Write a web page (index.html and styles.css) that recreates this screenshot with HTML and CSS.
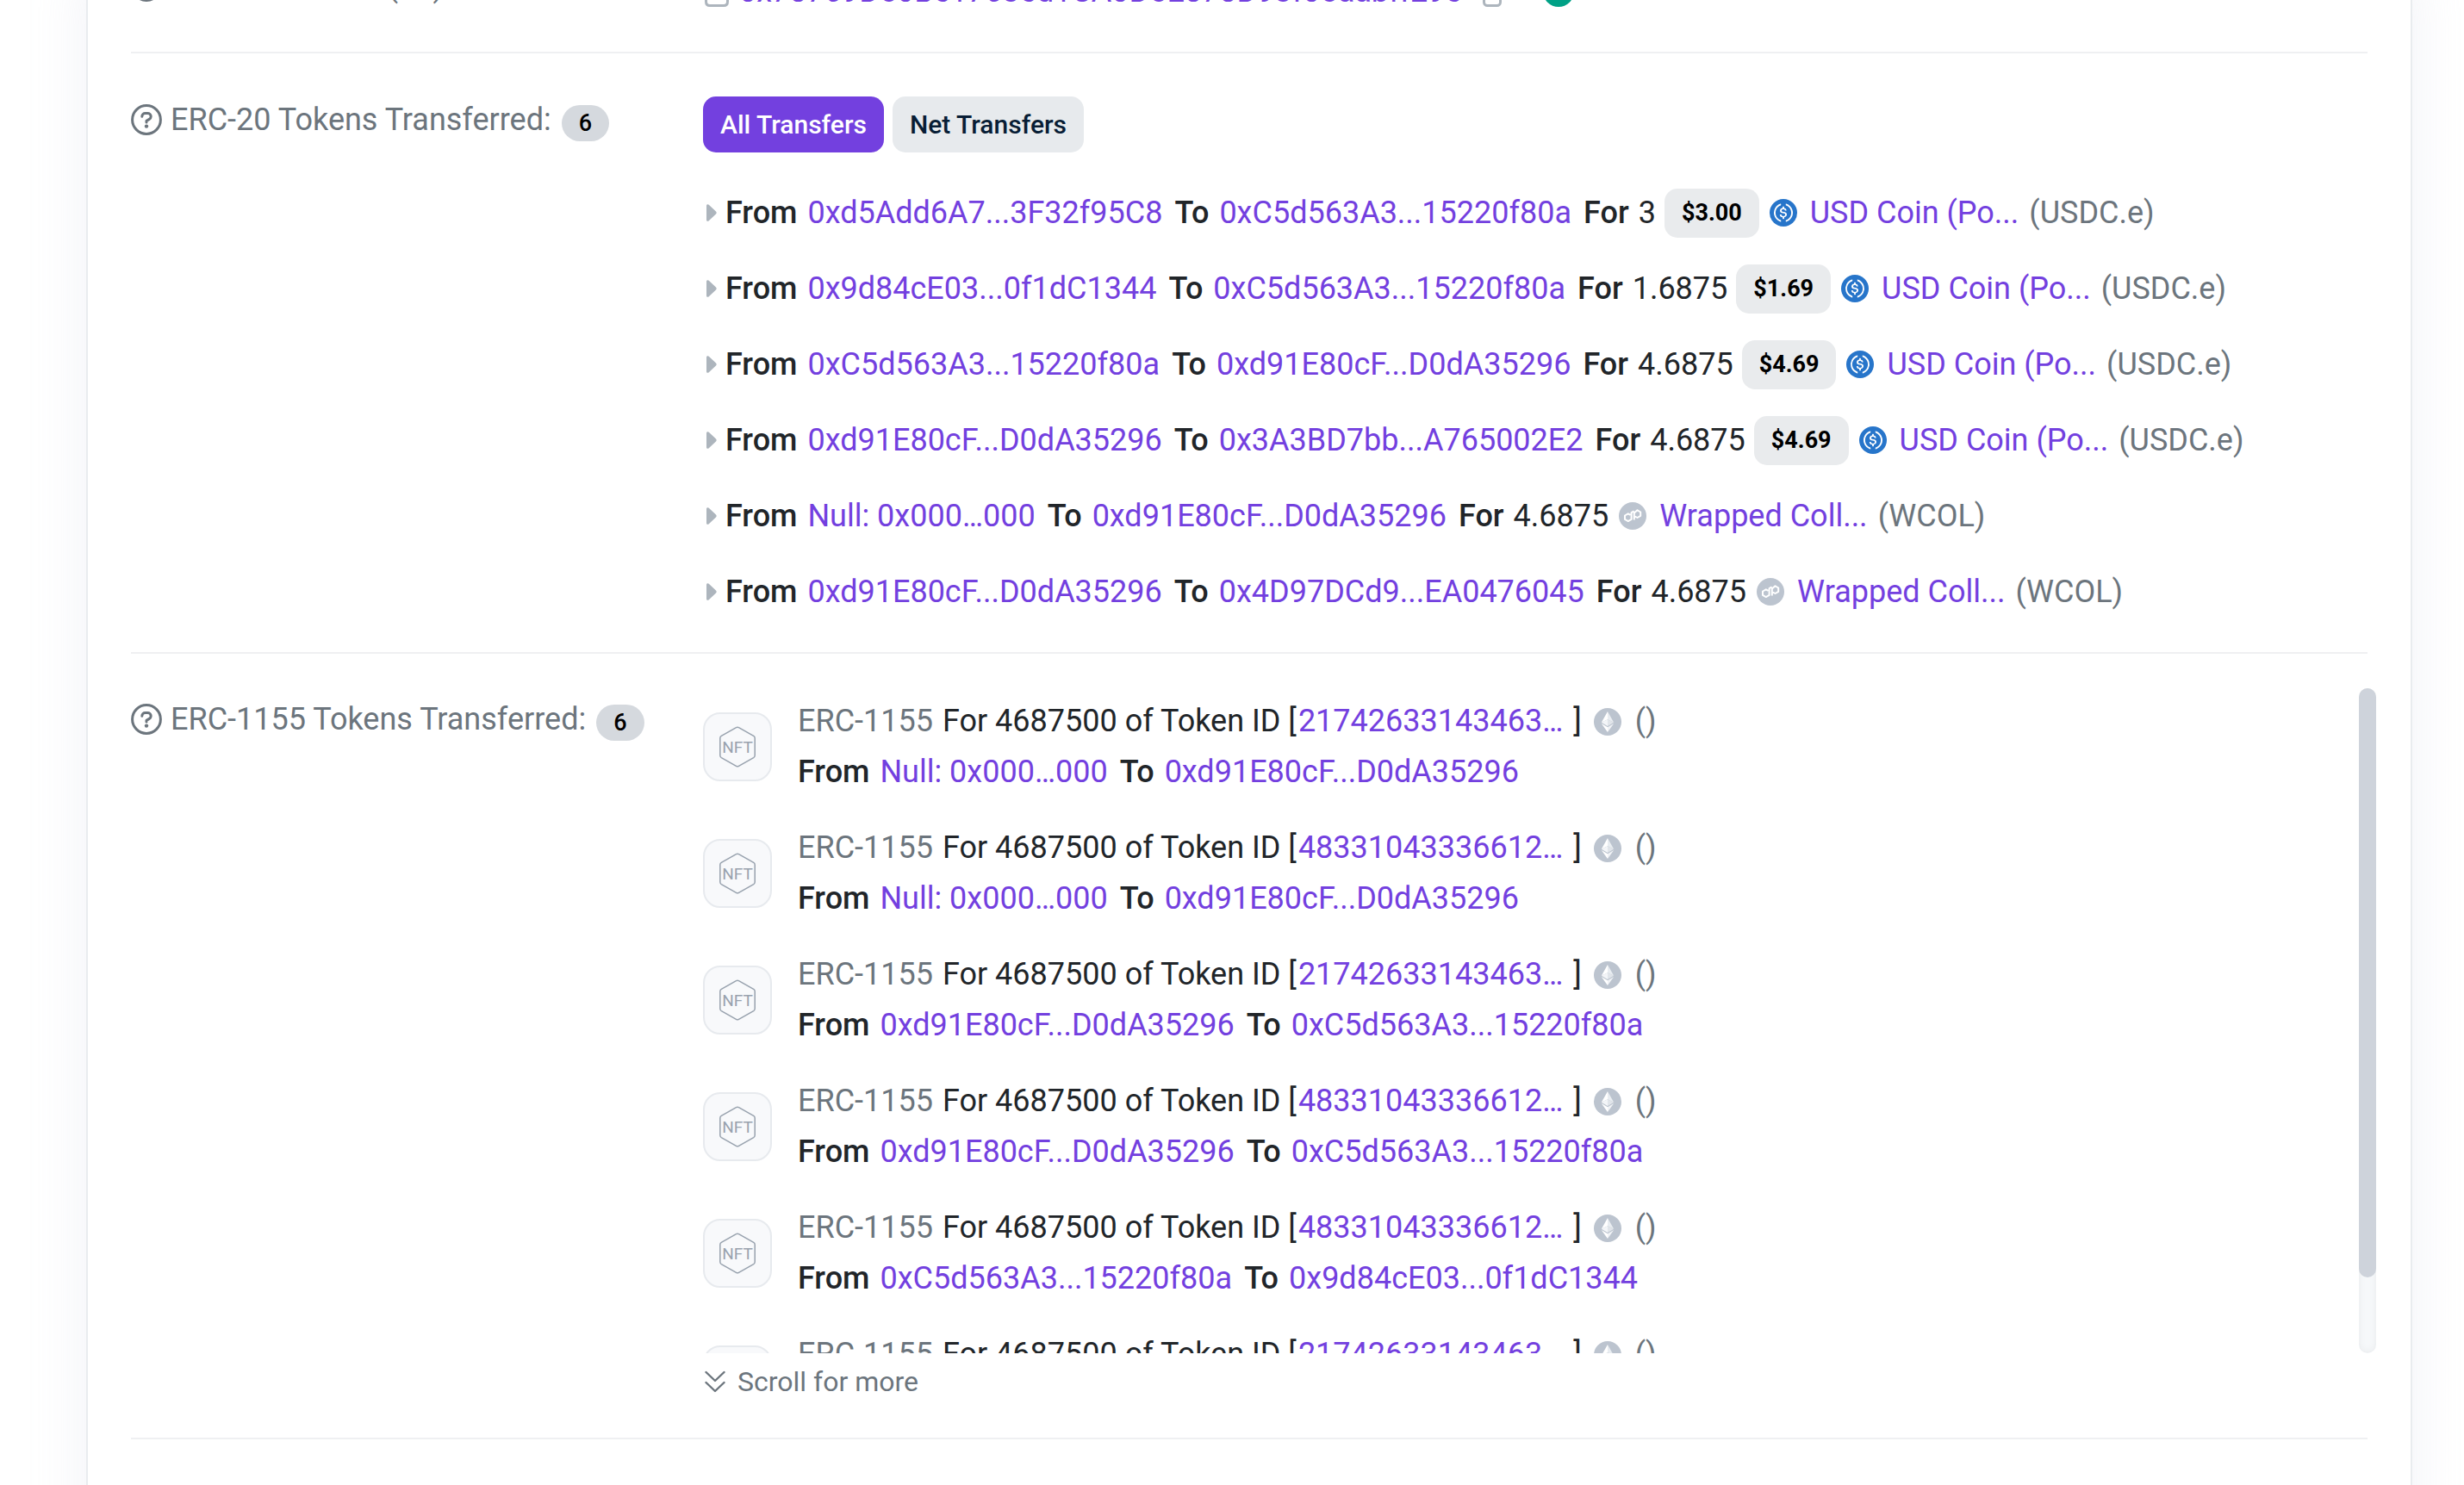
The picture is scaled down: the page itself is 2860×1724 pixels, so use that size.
FILE: index.html
```html
<!DOCTYPE html>
<html lang="en">
<head>
<meta charset="utf-8">
<title>Transaction Details</title>
<link rel="stylesheet" href="styles.css">
</head>
<body>
<svg class="sprite" aria-hidden="true">
  <symbol id="help" viewBox="0 0 36 36"><circle cx="18" cy="18" r="16.4" fill="none" stroke="currentColor" stroke-width="3"/><path d="M12.8 14.2c0-2.300 1.700-3.700 3.800-3.700h2.700c2.200 0 3.900 1.600 3.900 3.700 0 1.400-.7 2.500-1.900 3.200L18 19.400v1.500" fill="none" stroke="currentColor" stroke-width="3" stroke-linecap="round" stroke-linejoin="round"/><circle cx="18" cy="25.600" r="2.200" fill="currentColor"/></symbol>
  <symbol id="caret" viewBox="0 0 12 20"><path d="M0 1.800C0 0 1.800-.2 2.800.8L11 8.600c.9.9.9 1.900 0 2.800L2.800 19.200C1.800 20.200 0 20 0 18.200z" fill="currentColor"/></symbol>
  <symbol id="usdc" viewBox="0 0 32 32"><circle cx="16" cy="16" r="16" fill="#2775ca"/><path fill="#fff" d="M20.022 18.124c0-2.124-1.280-2.852-3.840-3.156-1.828-.243-2.193-.728-2.193-1.578 0-.85.61-1.396 1.828-1.396 1.097 0 1.707.364 2.011 1.275a.458.458 0 00.427.303h.975a.416.416 0 00.427-.425v-.06a3.040 3.040 0 00-2.743-2.489V9.142c0-.243-.183-.425-.487-.486h-.915c-.243 0-.426.182-.487.486v1.396c-1.829.242-2.986 1.456-2.986 2.974 0 2.002 1.218 2.791 3.778 3.095 1.707.303 2.255.668 2.255 1.639 0 .97-.853 1.638-2.011 1.638-1.585 0-2.133-.667-2.316-1.578-.06-.242-.244-.364-.427-.364h-1.036a.416.416 0 00-.426.425v.06c.243 1.518 1.219 2.610 3.230 2.914v1.457c0 .242.183.425.487.485h.915c.243 0 .426-.182.487-.485V21.340c1.829-.303 3.047-1.578 3.047-3.217z"/><path fill="#fff" d="M12.892 24.497c-4.754-1.700-7.192-6.980-5.424-11.653.914-2.550 2.925-4.491 5.424-5.402.244-.121.365-.303.365-.607v-.85c0-.242-.121-.424-.365-.485-.061 0-.183 0-.244.06a10.895 10.895 0 00-7.130 13.717c1.096 3.400 3.717 6.010 7.130 7.102.244.121.488 0 .548-.243.061-.06.061-.122.061-.243v-.85c0-.182-.182-.424-.365-.546zm6.460-18.936c-.244-.122-.488 0-.548.242-.061.061-.061.122-.061.243v.85c0 .243.182.485.365.607 4.754 1.700 7.192 6.980 5.424 11.653-.914 2.550-2.925 4.491-5.424 5.402-.244.121-.365.303-.365.607v.85c0 .242.121.424.365.485.061 0 .183 0 .244-.06a10.895 10.895 0 007.130-13.717c-1.096-3.460-3.778-6.070-7.130-7.162z"/></symbol>
  <symbol id="polygon" viewBox="0 0 32 32"><circle cx="16" cy="16" r="16" fill="#bcc4cf"/><path d="M13.500 14.800l-2.700-1.500-3.800 2.200v4.400l3.800 2.200 3.800-2.200v-7.800l3-1.800M17.800 20.500v-7.900l3.700-3.300 3.700 2.200v4.300l-3.700 2.200-2.700-1.500" fill="none" stroke="#fff" stroke-width="2" stroke-linejoin="round"/></symbol>
  <symbol id="eth" viewBox="0 0 32 32"><circle cx="16" cy="16" r="16" fill="#bcc4cf"/><path d="M16 4v9.200l7.200 3.500z" fill="#e9edf1"/><path d="M16 4 8.800 16.700l7.200-3.500z" fill="#fff"/><path d="M16 13.200v7.700l7.200-4.200z" fill="#e1e5ea"/><path d="M16 13.200l-7.200 3.500 7.200 4.200z" fill="#f3f5f8"/><path d="M16 22.200v5.800l7.200-10z" fill="#f1f3f6"/><path d="M16 28v-5.800L8.800 18z" fill="#fff"/></symbol>
  <symbol id="nft" viewBox="0 0 44 48"><path d="M20.500 1.700q1.500-.9 3 0l17.200 9.700q1.500.9 1.500 2.600v20q0 1.700-1.500 2.600L23.500 46.300q-1.500.9-3 0L3.300 36.600q-1.500-.9-1.500-2.600V14q0-1.700 1.500-2.600z" fill="none" stroke="#98a2ae" stroke-width="1.500"/><text class="nft-text" x="22" y="31" text-anchor="middle">NFT</text></symbol>
  <symbol id="file" viewBox="0 0 28 36"><path d="M6 1.500h11l9.500 9V30q0 4.500-4.500 4.500H6Q1.500 34.500 1.500 30V6Q1.500 1.500 6 1.500z" fill="none" stroke="currentColor" stroke-width="3"/></symbol>
  <symbol id="copy" viewBox="0 0 22 36"><rect x="1.500" y="8" width="19" height="26.500" rx="4" fill="none" stroke="currentColor" stroke-width="3"/></symbol>
  <symbol id="check" viewBox="0 0 36 36"><circle cx="18" cy="18" r="18" fill="#00a186"/><path d="M10 18l6 6 10-11" fill="none" stroke="#fff" stroke-width="3"/></symbol>
  <symbol id="chevrons" viewBox="0 0 24 26"><path d="M1.500 2l10.500 10L22.500 2M1.500 14l10.500 10 10.500-10" fill="none" stroke="currentColor" stroke-width="2.400" stroke-linecap="round" stroke-linejoin="round"/></symbol>
</svg>

<main class="card">
  <section class="row row-to">
    <h2 class="label"><svg class="i-help"><use href="#help"/></svg>Interacted With (To):</h2>
    <div class="to-line"><svg class="i-file"><use href="#file"/></svg><a href="#">0x78769D50Be1763ed1CA0D5E878D93f05aabff29e</a><svg class="i-copy"><use href="#copy"/></svg><svg class="i-check"><use href="#check"/></svg></div>
  </section>

  <section class="row row-erc20">
    <h2 class="label"><svg class="i-help"><use href="#help"/></svg>ERC-20 Tokens Transferred: <span class="count">6</span></h2>
    <div class="content">
      <div class="tabs"><button class="tab active" type="button">All Transfers</button><button class="tab" type="button">Net Transfers</button></div>
      <ul class="transfers">
        <li class="transfer"><svg class="i-caret"><use href="#caret"/></svg><b>From</b><a class="address" href="#">0xd5Add6A7...3F32f95C8</a><b>To</b><a class="address" href="#">0xC5d563A3...15220f80a</a><b>For</b><span class="amount">3</span><span class="price">$3.00</span><svg class="i-token"><use href="#usdc"/></svg><a class="token" href="#">USD Coin (Po...</a><span class="muted">(USDC.e)</span></li>
        <li class="transfer"><svg class="i-caret"><use href="#caret"/></svg><b>From</b><a class="address" href="#">0x9d84cE03...0f1dC1344</a><b>To</b><a class="address" href="#">0xC5d563A3...15220f80a</a><b>For</b><span class="amount">1.6875</span><span class="price">$1.69</span><svg class="i-token"><use href="#usdc"/></svg><a class="token" href="#">USD Coin (Po...</a><span class="muted">(USDC.e)</span></li>
        <li class="transfer"><svg class="i-caret"><use href="#caret"/></svg><b>From</b><a class="address" href="#">0xC5d563A3...15220f80a</a><b>To</b><a class="address" href="#">0xd91E80cF...D0dA35296</a><b>For</b><span class="amount">4.6875</span><span class="price">$4.69</span><svg class="i-token"><use href="#usdc"/></svg><a class="token" href="#">USD Coin (Po...</a><span class="muted">(USDC.e)</span></li>
        <li class="transfer"><svg class="i-caret"><use href="#caret"/></svg><b>From</b><a class="address" href="#">0xd91E80cF...D0dA35296</a><b>To</b><a class="address" href="#">0x3A3BD7bb...A765002E2</a><b>For</b><span class="amount">4.6875</span><span class="price">$4.69</span><svg class="i-token"><use href="#usdc"/></svg><a class="token" href="#">USD Coin (Po...</a><span class="muted">(USDC.e)</span></li>
        <li class="transfer"><svg class="i-caret"><use href="#caret"/></svg><b>From</b><a class="address" href="#">Null: 0x000…000</a><b>To</b><a class="address" href="#">0xd91E80cF...D0dA35296</a><b>For</b><span class="amount">4.6875</span><svg class="i-token"><use href="#polygon"/></svg><a class="token" href="#">Wrapped Coll...</a><span class="muted">(WCOL)</span></li>
        <li class="transfer"><svg class="i-caret"><use href="#caret"/></svg><b>From</b><a class="address" href="#">0xd91E80cF...D0dA35296</a><b>To</b><a class="address" href="#">0x4D97DCd9...EA0476045</a><b>For</b><span class="amount">4.6875</span><svg class="i-token"><use href="#polygon"/></svg><a class="token" href="#">Wrapped Coll...</a><span class="muted">(WCOL)</span></li>
      </ul>
    </div>
  </section>

  <section class="row row-erc1155">
    <h2 class="label"><svg class="i-help"><use href="#help"/></svg>ERC-1155 Tokens Transferred: <span class="count">6</span></h2>
    <div class="content">
      <div class="scroller">
        <ul class="nfts" tabindex="0">
          <li class="nft"><span class="thumb"><svg class="i-nft"><use href="#nft"/></svg></span><div><p class="line"><span class="muted kind">ERC-1155</span> For 4687500 of Token ID [<a href="#">21742633143463…</a> ]<svg class="i-eth"><use href="#eth"/></svg><span class="muted">()</span></p><p class="route"><b>From</b><a class="address" href="#">Null: 0x000…000</a><b>To</b><a class="address" href="#">0xd91E80cF...D0dA35296</a></p></div></li>
          <li class="nft"><span class="thumb"><svg class="i-nft"><use href="#nft"/></svg></span><div><p class="line"><span class="muted kind">ERC-1155</span> For 4687500 of Token ID [<a href="#">48331043336612…</a> ]<svg class="i-eth"><use href="#eth"/></svg><span class="muted">()</span></p><p class="route"><b>From</b><a class="address" href="#">Null: 0x000…000</a><b>To</b><a class="address" href="#">0xd91E80cF...D0dA35296</a></p></div></li>
          <li class="nft"><span class="thumb"><svg class="i-nft"><use href="#nft"/></svg></span><div><p class="line"><span class="muted kind">ERC-1155</span> For 4687500 of Token ID [<a href="#">21742633143463…</a> ]<svg class="i-eth"><use href="#eth"/></svg><span class="muted">()</span></p><p class="route"><b>From</b><a class="address" href="#">0xd91E80cF...D0dA35296</a><b>To</b><a class="address" href="#">0xC5d563A3...15220f80a</a></p></div></li>
          <li class="nft"><span class="thumb"><svg class="i-nft"><use href="#nft"/></svg></span><div><p class="line"><span class="muted kind">ERC-1155</span> For 4687500 of Token ID [<a href="#">48331043336612…</a> ]<svg class="i-eth"><use href="#eth"/></svg><span class="muted">()</span></p><p class="route"><b>From</b><a class="address" href="#">0xd91E80cF...D0dA35296</a><b>To</b><a class="address" href="#">0xC5d563A3...15220f80a</a></p></div></li>
          <li class="nft"><span class="thumb"><svg class="i-nft"><use href="#nft"/></svg></span><div><p class="line"><span class="muted kind">ERC-1155</span> For 4687500 of Token ID [<a href="#">48331043336612…</a> ]<svg class="i-eth"><use href="#eth"/></svg><span class="muted">()</span></p><p class="route"><b>From</b><a class="address" href="#">0xC5d563A3...15220f80a</a><b>To</b><a class="address" href="#">0x9d84cE03...0f1dC1344</a></p></div></li>
          <li class="nft"><span class="thumb"><svg class="i-nft"><use href="#nft"/></svg></span><div><p class="line"><span class="muted kind">ERC-1155</span> For 4687500 of Token ID [<a href="#">21742633143463…</a> ]<svg class="i-eth"><use href="#eth"/></svg><span class="muted">()</span></p></div></li>
        </ul>
        <div class="track"><div class="handle"></div></div>
      </div>
      <p class="more"><svg class="i-more"><use href="#chevrons"/></svg>Scroll for more</p>
    </div>
  </section>
</main>
</body>
</html>
```
FILE: styles.css
```css
* { box-sizing: border-box; }

html { background: #fff; }

body {
  margin: 0;
  height: 100vh;
  overflow: hidden;
  padding: 0 60px 0 100px;
  font-family: Roboto, "Liberation Sans", sans-serif;
  font-size: 36px;
  line-height: 54px;
  color: #212529;
}

.sprite { position: absolute; width: 0; height: 0; }

h2, p, ul { margin: 0; padding: 0; }
ul { list-style: none; }
b { font-weight: 500; }
a { color: #7340df; text-decoration: none; }
svg { flex: none; }
.muted { color: #6c757d; }

.card {
  min-height: 110vh;
  margin-top: -60px;
  padding: 0 50px;
  background: #fff;
  border: 2px solid #e9ecef;
  box-shadow: 0 20px 60px rgba(189, 197, 220, 0.22);
}

.row {
  display: grid;
  grid-template-columns: minmax(0, 1fr) minmax(0, 3fr);
  column-gap: 20px;
  align-items: start;
  border-bottom: 2px solid #eff0f2;
}

.label {
  display: flex;
  align-items: center;
  font-size: 36px;
  font-weight: 400;
  color: #6c757d;
  white-space: nowrap;
}

.i-help { width: 36px; height: 36px; margin-right: 10px; }

.count {
  height: 42px;
  margin: 8px 0 0 12px;
  padding: 0 20px;
  border-radius: 21px;
  background: #d5d9de;
  color: #000;
  font-size: 27px;
  font-weight: 500;
  line-height: 42px;
}

/* Interacted with */
.row-to { padding: 15px 0 43px; }
.to-line { display: flex; align-items: center; padding-top: 6px; }
.i-file { width: 28px; height: 36px; margin: 0 12px 0 2px; color: #adb5bd; }
.i-copy { width: 22px; height: 36px; margin: 0 48px 0 24px; color: #adb5bd; }
.i-check { width: 36px; height: 36px; }

/* ERC-20 */
.row-erc20 { padding: 50px 0 41px; }

.tabs { display: flex; gap: 10px; margin-bottom: 41px; }

.tab {
  height: 65px;
  padding: 0 20px;
  border: 0;
  border-radius: 15px;
  background: #e7eaed;
  color: #081d35;
  font: 500 30px/65px Roboto, "Liberation Sans", sans-serif;
}

.tab.active { background: #7340df; color: #fff; }

.transfers { display: grid; gap: 30px; }

.transfer {
  display: flex;
  align-items: center;
  gap: 12px;
  height: 58px;
  margin-left: 4px;
  white-space: nowrap;
}

.i-caret { width: 12px; height: 20px; margin-right: -2px; color: #adb5bd; }

.address { margin-right: 2px; }

.amount { margin-left: -1px; }

.price {
  height: 57px;
  margin-left: -2px;
  padding: 0 20px;
  border-radius: 15px;
  background: #e9ebed;
  color: #000;
  font-size: 27px;
  font-weight: 700;
  line-height: 57px;
}

.i-token { width: 32px; height: 32px; margin-right: 3px; }

/* ERC-1155 */
.row-erc1155 { padding: 40px 0 38px; }
.row-erc1155 .label { padding-top: 9px; }

.scroller { position: relative; }

.nfts {
  display: grid;
  gap: 29px;
  height: 772px;
  padding: 9px 0 0;
  overflow: hidden;
}

.track {
  position: absolute;
  top: 0;
  right: -10px;
  width: 20px;
  height: 100%;
  border-radius: 10px;
  background: #f6f8fa;
  box-shadow: inset 0 0 10px rgba(0, 0, 0, 0.06);
}

.handle { height: calc(100% - 88px); border-radius: 10px; background: #ced3db; }

.nft { display: flex; align-items: center; gap: 30px; height: 118px; }

.thumb {
  display: flex;
  align-items: center;
  justify-content: center;
  width: 80px;
  height: 80px;
  border: 2px solid #e7eaee;
  border-radius: 20px;
  background: #f8f9fb;
}

.nft > div { align-self: start; }

.i-nft { width: 44px; height: 48px; }

.nft-text {
  font: 400 19px Roboto, sans-serif;
  fill: #98a2ae;
}

.line, .route { display: flex; align-items: center; line-height: 59px; white-space: pre; }
.kind { margin-right: 2px; }
.line a { margin: 0 3px 0 2px; }
.route { gap: 12px; }
.i-eth { width: 32px; height: 32px; margin: 0 16px 0 14px; }

.more {
  display: flex;
  align-items: center;
  margin: 6px 0 0 2px;
  color: #6c757d;
  font-size: 32px;
}

.i-more { width: 24px; height: 26px; margin-right: 14px; }
```
